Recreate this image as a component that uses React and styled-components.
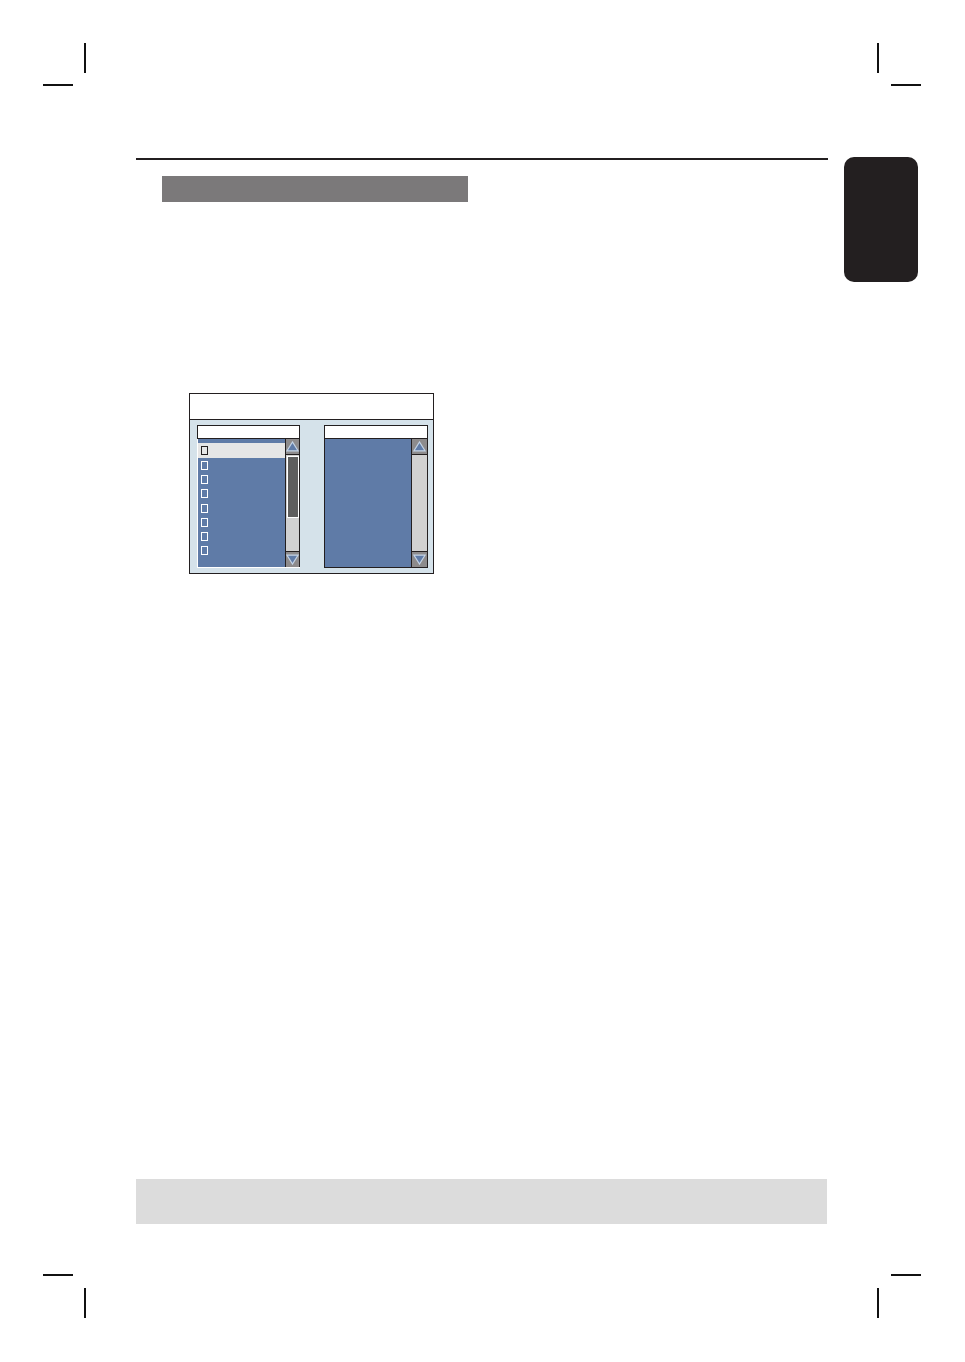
import React from 'react'
import styled, { createGlobalStyle } from 'styled-components'

const Global = createGlobalStyle`
  body {
    margin: 0;
    background: #fff;
    font-family: "Liberation Sans", Arial, sans-serif;
  }
`

const Page = styled.div`
  position: relative;
  width: 965px;
  height: 1362px;
  overflow: hidden;
  background: #fff;
`

const Mark = styled.div`
  position: absolute;
  left: ${p => p.x}px;
  top: ${p => p.y}px;
  width: ${p => (p.v ? 2 : 30)}px;
  height: ${p => (p.v ? 30 : 2)}px;
  background: #111;
`

const Row = styled.div`
  display: flex;
  align-items: flex-start;
  padding: 157px 0 0 136px;
`

const Column = styled.div`
  width: 692px;
  display: flex;
  flex-direction: column;
`

const Rule = styled.div`
  height: 2px;
  margin-top: 1px;
  background: #231f20;
`

const SectionBar = styled.div`
  width: 306px;
  height: 26px;
  margin: 16px 0 0 26px;
  background: #7b797a;
`

const Tab = styled.div`
  width: 74px;
  height: 125px;
  margin-left: 16px;
  border-radius: 10px;
  background: #231f20;
`

const Dialog = styled.div`
  width: 245px;
  height: 181px;
  margin: 191px 0 0 53px;
  box-sizing: border-box;
  border: 1.5px solid #231f20;
  display: flex;
  flex-direction: column;
`

const DialogTitle = styled.div`
  height: 25px;
  background: #fff;
  border-bottom: 1.5px solid #231f20;
`

const DialogBody = styled.div`
  flex: 1;
  background: #d5e2ea;
  display: flex;
  gap: 24px;
  padding: 5px 5px 0 7px;
`

const Pane = styled.div`
  width: ${p => p.w}px;
  height: 143px;
  box-sizing: border-box;
  display: flex;
  flex-direction: column;
  border: 1.5px solid ${p => (p.dark ? '#231f20' : '#fff')};
  border-top: none;
  ${p => !p.dark && 'border-right: none;'}
  background: #fff;
`

const PaneHeader = styled.div`
  height: 14px;
  flex: none;
  box-sizing: border-box;
  background: #fff;
  border: 1.5px solid #231f20;
  margin-left: ${p => (p.inset ? 0 : -1.5)}px;
  border-left-width: ${p => (p.inset ? 0 : 1.5)}px;
  border-right-width: ${p => (p.inset ? 0 : 1.5)}px;
`

const PaneList = styled.div`
  flex: 1;
  display: flex;
  min-height: 0;
`

const Items = styled.div`
  flex: 1;
  background: #5f7ba7;
  padding-top: 4px;
  display: flex;
  flex-direction: column;
`

const Item = styled.div`
  height: ${p => (p.selected ? 15 : 14.3)}px;
  flex: none;
  display: flex;
  align-items: center;
  padding-left: 3px;
  background: ${p => (p.selected ? '#e6e6e6' : 'transparent')};
`

const Check = styled.span`
  width: 7px;
  height: 9px;
  box-sizing: border-box;
  border: 1px solid ${p => (p.selected ? '#231f20' : '#fff')};
`

const Scrollbar = styled.div`
  width: ${p => p.w}px;
  flex: none;
  box-sizing: border-box;
  display: flex;
  flex-direction: column;
  background: #d1d1d1;
  border-left: 1.5px solid #231f20;
  ${p => p.edge && 'border-right: 1.5px solid #231f20;'}
`

const Arrow = styled.div`
  height: 15px;
  flex: none;
  background: #8d8b8c;
  display: flex;
  align-items: center;
  justify-content: center;
  border-${p => (p.down ? 'top' : 'bottom')}: 1.5px solid #231f20;
`

const Track = styled.div`
  flex: 1;
  padding: 1px 0 0 1px;
`

const Thumb = styled.div`
  height: 62px;
  box-sizing: border-box;
  background: #5e5e5e;
  border: 1px solid #fff;
`

const Footer = styled.div`
  width: 691px;
  height: 45px;
  margin-top: 605px;
  background: #dcdcdc;
`

function Triangle({ down }) {
  return (
    <svg width="13" height="11" viewBox="0 0 13 11">
      <polygon
        points={down ? '1,1.2 12,1.2 6.5,10' : '1,9.8 12,9.8 6.5,1'}
        fill="#5f7ba7"
        stroke="#c3d3e6"
        strokeWidth="1.2"
      />
    </svg>
  )
}

function ScrollBar({ w, thumb, edge }) {
  return (
    <Scrollbar w={w} edge={edge}>
      <Arrow>
        <Triangle />
      </Arrow>
      <Track>{thumb && <Thumb />}</Track>
      <Arrow down>
        <Triangle down />
      </Arrow>
    </Scrollbar>
  )
}

const marks = [
  { x: 84, y: 43, v: true },
  { x: 43, y: 84 },
  { x: 877, y: 43, v: true },
  { x: 891, y: 84 },
  { x: 43, y: 1274 },
  { x: 84, y: 1288, v: true },
  { x: 891, y: 1274 },
  { x: 877, y: 1288, v: true },
]

export default function App() {
  const rows = [0, 1, 2, 3, 4, 5, 6, 7]
  return (
    <Page>
      <Global />
      {marks.map((m, i) => (
        <Mark key={i} {...m} />
      ))}
      <Row>
        <Column>
          <Rule />
          <SectionBar />
          <Dialog>
            <DialogTitle />
            <DialogBody>
              <Pane w={103}>
                <PaneHeader />
                <PaneList>
                  <Items>
                    {rows.map(r => (
                      <Item key={r} selected={r === 0}>
                        <Check selected={r === 0} />
                      </Item>
                    ))}
                  </Items>
                  <ScrollBar w={15} thumb edge />
                </PaneList>
              </Pane>
              <Pane w={104} dark>
                <PaneHeader inset />
                <PaneList>
                  <Items />
                  <ScrollBar w={16} />
                </PaneList>
              </Pane>
            </DialogBody>
          </Dialog>
          <Footer />
        </Column>
        <Tab />
      </Row>
    </Page>
  )
}
